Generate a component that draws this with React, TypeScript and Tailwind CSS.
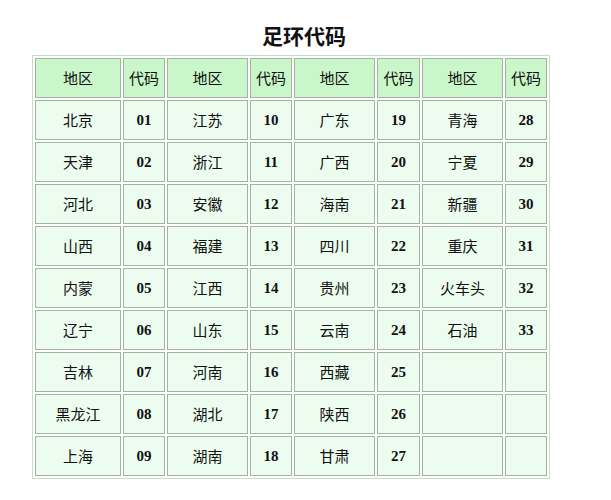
import React from 'react';

const rows: [string, string, string, string, string, string, string, string][] = [
  ['北京', '01', '江苏', '10', '广东', '19', '青海', '28'],
  ['天津', '02', '浙江', '11', '广西', '20', '宁夏', '29'],
  ['河北', '03', '安徽', '12', '海南', '21', '新疆', '30'],
  ['山西', '04', '福建', '13', '四川', '22', '重庆', '31'],
  ['内蒙', '05', '江西', '14', '贵州', '23', '火车头', '32'],
  ['辽宁', '06', '山东', '15', '云南', '24', '石油', '33'],
  ['吉林', '07', '河南', '16', '西藏', '25', '', ''],
  ['黑龙江', '08', '湖北', '17', '陕西', '26', '', ''],
  ['上海', '09', '湖南', '18', '甘肃', '27', '', ''],
];

// 列宽（地区 / 代码 交替）
const widths = ['w-[86px]', 'w-[42px]', 'w-[81px]', 'w-[42px]', 'w-[81px]', 'w-[43px]', 'w-[81px]', 'w-[42px]'];

export default function App() {
  return (
    <div className="min-h-[500px] w-[611px] bg-white pt-[22px]">
      <h1 className="ml-[262px] font-['Noto_Sans_CJK_SC',serif] text-[21px] font-bold leading-[26px] text-[#111]">
        足环代码
      </h1>
      <table className="ml-[32px] mt-[7px] border-separate border-spacing-[2px] border border-[#c8dcc8] text-[15px] text-[#111]">
        <thead>
          <tr>
            {widths.map((w, i) => (
              <th
                key={i}
                className={`${w} h-[40px] border border-[#9fb59f] bg-[#c9f7c9] p-0 text-center font-['Noto_Sans_CJK_SC',sans-serif] font-normal`}
              >
                {i % 2 === 0 ? '地区' : '代码'}
              </th>
            ))}
          </tr>
        </thead>
        <tbody>
          {rows.map((r, ri) => (
            <tr key={ri}>
              {r.map((c, ci) => (
                <td
                  key={ci}
                  className={`${widths[ci]} h-[40px] border border-[#9fb59f] bg-[#ecfdef] p-0 text-center ${
                    ci % 2 === 1
                      ? "font-['Liberation_Serif',serif] font-bold"
                      : "font-['Noto_Sans_CJK_SC',sans-serif]"
                  }`}
                >
                  {c}
                </td>
              ))}
            </tr>
          ))}
        </tbody>
      </table>
    </div>
  );
}
